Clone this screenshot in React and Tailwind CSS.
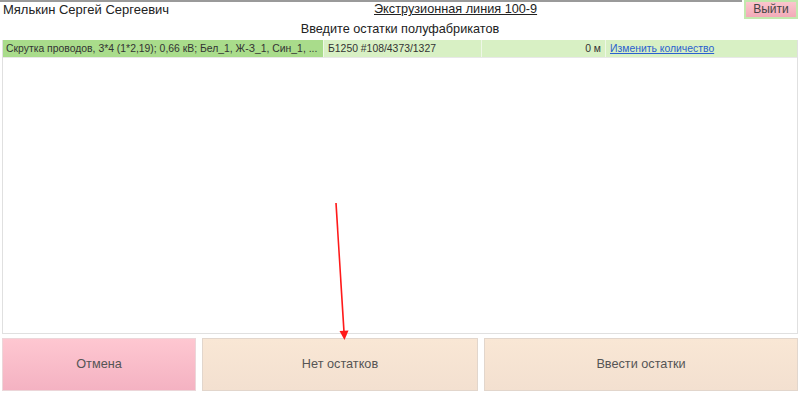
import React from 'react';

function App() {
  return (
    <div className="relative w-[800px] h-[394px] bg-white overflow-hidden font-['Liberation_Sans',Arial,sans-serif] text-[#333]">
      {/* header */}
      <div className="flex items-start h-[20px]">
        <div className="flex-1 border-t-2 border-[#9a9a9a] h-[20px] relative">
          <span className="absolute left-[3px] top-0 text-[13px] leading-[15px] text-[#222]">Мялькин Сергей Сергеевич</span>
          <span className="absolute left-[374px] top-0 text-[12.7px] leading-[15px] underline text-[#222]">Экструзионная линия 100-9</span>
        </div>
        <div className="w-[58px] pl-[2px] pr-[2px]">
          <button className="block w-[54px] h-[19px] bg-gradient-to-b from-[#fbc6cd] to-[#f2aab8] border-2 border-[#c2e8ad] text-[12px] leading-[15px] text-[#444]">
            Выйти
          </button>
        </div>
      </div>
      <div className="text-center text-[12.7px] leading-[16px] text-[#222] mt-[1px]">Введите остатки полуфабрикатов</div>

      {/* list */}
      <div className="mx-[2px] mt-[3px] h-[294px] border border-[#e0e0e0] border-t-0">
        <div className="flex h-[18px] text-[10.4px] leading-[18px] text-[#333] border-b border-[#e8e8e8]">
          <div className="w-[320px] bg-[#a9dc8b] px-[3px] whitespace-nowrap overflow-hidden">Скрутка проводов, 3*4 (1*2,19); 0,66 кВ; Бел_1, Ж-З_1, Син_1, ...</div>
          <div className="w-[158px] bg-[#d8f0c4] px-[4px] border-l border-[#eef7e6]">Б1250 #108/4373/1327</div>
          <div className="w-[124px] bg-[#d8f0c4] px-[4px] text-right border-l border-[#eef7e6]">0 м</div>
          <div className="flex-1 bg-[#d8f0c4] px-[4px] border-l border-[#eef7e6]">
            <a className="text-[#2a5fcf] underline">Изменить количество</a>
          </div>
        </div>
      </div>

      {/* buttons */}
      <div className="flex gap-[6px] mx-[2px] mt-[4px] h-[53px]">
        <button className="w-[194px] bg-gradient-to-b from-[#fec7d1] to-[#f4b2c2] border border-[#ecd6d9] text-[12.7px] text-[#555]">
          Отмена
        </button>
        <button className="w-[276px] bg-gradient-to-b from-[#f9e7d5] to-[#f3e0d0] border border-[#e2d6cc] text-[12.7px] text-[#555]">
          Нет остатков
        </button>
        <button className="flex-1 bg-gradient-to-b from-[#f9e7d5] to-[#f3e0d0] border border-[#e2d6cc] text-[12.7px] text-[#555]">
          Ввести остатки
        </button>
      </div>

      {/* red annotation arrow */}
      <svg className="absolute left-0 top-0 pointer-events-none" width="800" height="394">
        <line x1="336" y1="203" x2="344" y2="332" stroke="#ff1a1a" strokeWidth="1.6" />
        <polygon points="339.5,331 348.5,330.5 344.5,340" fill="#ff1a1a" />
      </svg>
    </div>
  );
}

export default App;
